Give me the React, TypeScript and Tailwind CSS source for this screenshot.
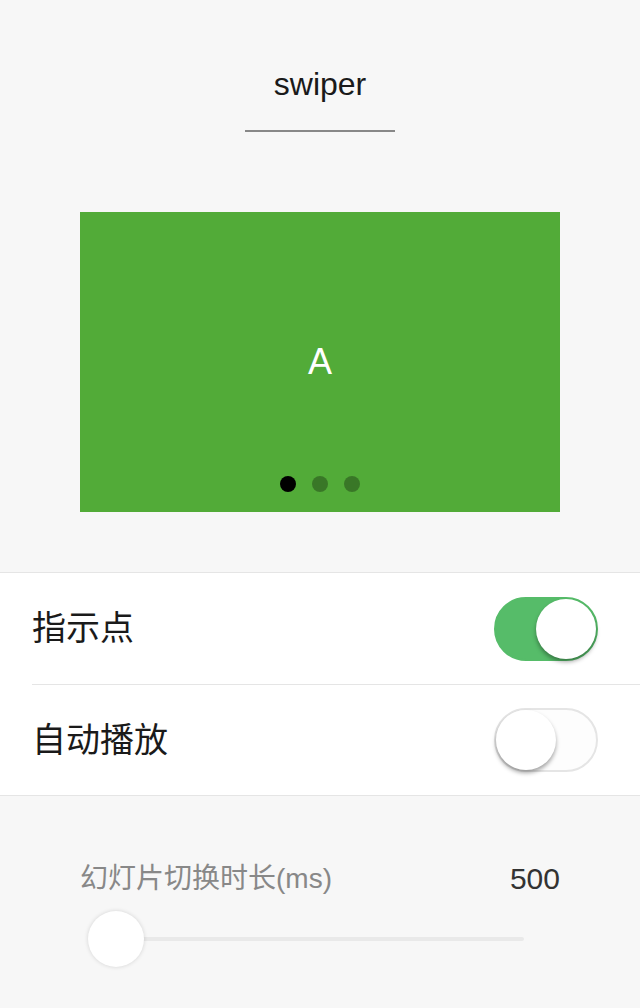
import React, { useState } from 'react';

function Switch({ on, onChange }: { on: boolean; onChange: () => void }) {
  return (
    <button
      onClick={onChange}
      className={`relative w-[104px] h-[64px] rounded-full border-2 transition-colors ${
        on ? 'bg-[#56bc69] border-[#56bc69]' : 'bg-[#fdfdfd] border-[#e5e5e5]'
      }`}
    >
      <span
        className={`absolute top-0 w-[60px] h-[60px] rounded-full bg-white shadow-[0_3px_4px_rgba(0,0,0,0.35)] transition-all ${
          on ? 'left-[40px]' : 'left-0'
        }`}
      />
    </button>
  );
}

export default function App() {
  const [dots, setDots] = useState(true);
  const [auto, setAuto] = useState(false);
  const font = { fontFamily: '"Liberation Sans", "Noto Sans CJK SC", sans-serif' };

  return (
    <div className="w-[640px] h-[1008px] bg-[#f7f7f7] overflow-hidden" style={font}>
      <div className="pt-[64px] flex flex-col items-center">
        <h1 className="text-[32px] leading-[40px] text-[#1a1a1a]">swiper</h1>
        <div className="mt-[26px] w-[150px] h-[2px] bg-[#888]" />
      </div>

      <div className="mt-[80px] mx-[80px] h-[300px] bg-[#52ab38] flex flex-col items-center relative">
        <div className="flex-1 flex items-center justify-center text-white text-[36px]">A</div>
        {dots && (
          <div className="absolute bottom-[20px] left-0 right-0 flex justify-center gap-[16px]">
            <span className="w-[16px] h-[16px] rounded-full bg-black" />
            <span className="w-[16px] h-[16px] rounded-full bg-black/30" />
            <span className="w-[16px] h-[16px] rounded-full bg-black/30" />
          </div>
        )}
      </div>

      <div className="mt-[60px] bg-white border-t border-b border-[#e5e5e5]">
        <div className="h-[112px] pl-[32px] flex">
          <div className="flex-1 flex items-center justify-between pr-[42px] border-b border-[#e5e5e5]">
            <span className="text-[34px] text-[#1a1a1a]">指示点</span>
            <Switch on={dots} onChange={() => setDots(!dots)} />
          </div>
        </div>
        <div className="h-[110px] pl-[32px] flex">
          <div className="flex-1 flex items-center justify-between pr-[42px]">
            <span className="text-[34px] text-[#1a1a1a]">自动播放</span>
            <Switch on={auto} onChange={() => setAuto(!auto)} />
          </div>
        </div>
      </div>

      <div className="px-[80px] pt-[60px]">
        <div className="flex items-center justify-between">
          <span className="text-[28px] text-[#888]">幻灯片切换时长(ms)</span>
          <span className="text-[30px] text-[#333]">500</span>
        </div>
        <div className="mt-[10px] relative h-[56px] flex items-center ml-[8px] mr-[36px]">
          <div className="w-full h-[4px] bg-[#e9e9e9] rounded" />
          <span className="absolute left-0 top-0 w-[56px] h-[56px] rounded-full bg-white shadow-[0_0_4px_rgba(0,0,0,0.15)]" />
        </div>
      </div>
    </div>
  );
}
